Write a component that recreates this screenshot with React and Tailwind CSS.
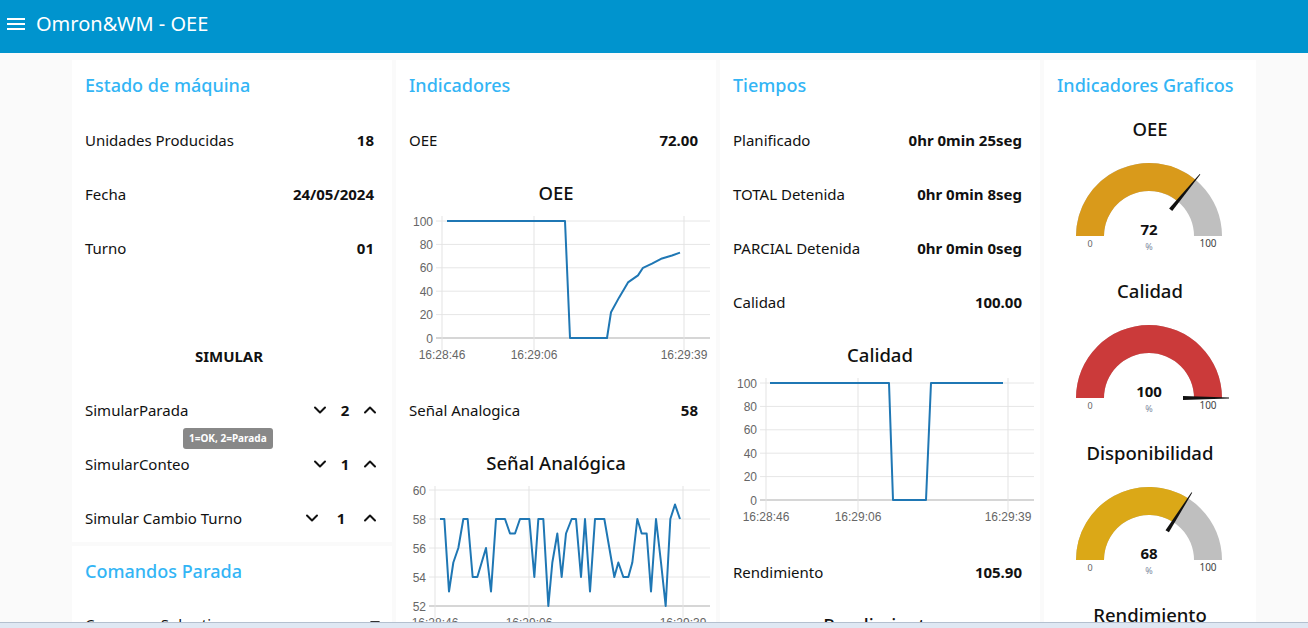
import React from 'react';

// Node-RED style OEE dashboard
const FONT = { fontFamily: "'Noto Sans', 'Open Sans', sans-serif" };

function Row({ label, value }) {
  return (
    <div className="mt-[6px] h-[48px] flex items-center justify-between pl-[13px] pr-[18px] text-[15px] text-[#111]">
      <span>{label}</span>
      <span className="font-bold">{value}</span>
    </div>
  );
}

function Chevron({ up }) {
  return (
    <svg width="14" height="14" viewBox="0 0 14 14">
      <polyline
        points={up ? '2,9.5 7,4.5 12,9.5' : '2,4.5 7,9.5 12,4.5'}
        fill="none"
        stroke="#111"
        strokeWidth="2"
        strokeLinecap="round"
        strokeLinejoin="round"
      />
    </svg>
  );
}

function Numeric({ label, value, width, children }) {
  return (
    <div className="relative mt-[6px] h-[48px] flex items-center justify-between pl-[13px] pr-[15px] text-[15px] text-[#111]">
      <span>{label}</span>
      <div className={`flex items-center justify-between ${width}`}>
        <Chevron />
        <span className="font-bold">{value}</span>
        <Chevron up />
      </div>
      {children}
    </div>
  );
}

function Card({ title, className = '', children }) {
  return (
    <div className={`bg-white ${className}`}>
      <div className="h-[50px] flex items-center px-[13px] text-[18px] font-medium text-[#33b5f5]">{title}</div>
      {children}
    </div>
  );
}

function LineChart({ title, yTicks, yTop, yBot, yMin, yMax, axisX, labelX, xTicks, points, xLabelY }) {
  const sy = (v) => yBot - ((v - yMin) / (yMax - yMin)) * (yBot - yTop);
  return (
    <div className="mt-[6px] h-[210px]">
      <div className="h-[46px] flex items-center justify-center text-[18.5px] font-medium text-[#111]">{title}</div>
      <svg width="320" height="164" className="block">
        {yTicks.map((v) => (
          <g key={v}>
            <line x1={axisX - 6} x2={314} y1={sy(v)} y2={sy(v)} stroke={v === yMin ? '#d6d6d6' : '#e6e6e6'} strokeWidth={v === yMin ? 2 : 1} />
            <text x={labelX} y={sy(v) + 4.5} textAnchor="end" fontSize="12" fill="#666" fontFamily="'Liberation Sans', Arial, sans-serif">{v}</text>
          </g>
        ))}
        {xTicks.map(([x, l]) => (
          <g key={l}>
            <line x1={x} x2={x} y1={yTop - 8} y2={yBot + 12} stroke="#e3e3e3" strokeWidth="1" />
            <text x={x} y={xLabelY} textAnchor="middle" fontSize="12" fill="#666" fontFamily="'Liberation Sans', Arial, sans-serif">{l}</text>
          </g>
        ))}
        <polyline
          points={points.map(([x, v]) => `${x},${sy(v)}`).join(' ')}
          fill="none"
          stroke="#1f77b4"
          strokeWidth="2"
          strokeLinejoin="round"
        />
      </svg>
    </div>
  );
}

function Gauge({ title, value, color }) {
  const cx = 105, cy = 94, R = 73, r = 45;
  const th = Math.PI * (1 - value / 100);
  const pt = (rad, a = th) => [cx + rad * Math.cos(a), cy - rad * Math.sin(a)];
  const [ox, oy] = pt(R);
  const [ix, iy] = pt(r);
  const bg = `M ${cx - R} ${cy} A ${R} ${R} 0 0 1 ${cx + R} ${cy} L ${cx + r} ${cy} A ${r} ${r} 0 0 0 ${cx - r} ${cy} Z`;
  const fg = `M ${cx - R} ${cy} A ${R} ${R} 0 0 1 ${ox} ${oy} L ${ix} ${iy} A ${r} ${r} 0 0 0 ${cx - r} ${cy} Z`;
  const px = Math.sin(th), py = Math.cos(th);
  const [b1, b2] = pt(34);
  const [t1, t2] = pt(80);
  const needle = `${b1 + 2 * px},${b2 + 2 * py} ${t1 + 0.4 * px},${t2 + 0.4 * py} ${t1 - 0.4 * px},${t2 - 0.4 * py} ${b1 - 2 * px},${b2 - 2 * py}`;
  return (
    <div className="mt-[6px] h-[156px]">
      <div className="h-[26px] flex items-center justify-center text-[18.5px] font-medium text-[#111]">{title}</div>
      <svg width="212" height="130" className="block">
        <path d={bg} fill="#bfbfbf" />
        <path d={fg} fill={color} />
        <polygon points={needle} fill="#111" />
        <text x={cx} y={cy - 1} textAnchor="middle" fontSize="15" fontWeight="bold" fill="#111" style={FONT}>{value}</text>
        <text x={cx} y={cy + 14} textAnchor="middle" fontSize="9" fill="#7d8aa0" style={FONT}>%</text>
        <text x={cx - 59} y={cy + 11} textAnchor="middle" fontSize="9" fill="#666" style={FONT}>0</text>
        <text x={cx + 59} y={cy + 11} textAnchor="middle" fontSize="10" fill="#444" style={FONT}>100</text>
      </svg>
    </div>
  );
}

const oeePts = [[51, 100], [169, 100], [174, 0], [211, 0], [215, 22], [223, 34.5], [232, 47.5], [242, 53.5], [247, 60], [256, 63.5], [266, 68], [276, 70.5], [284, 73]];
const calPts = [[50, 100], [169, 100], [173, 0], [206, 0], [211, 100], [283, 100]];
const senalRaw = [[135, 58], [148, 58], [162, 53], [175, 55], [190, 56], [205, 58], [218, 58], [233, 54], [247, 54], [260, 55], [273, 56], [288, 53], [303, 58], [330, 58], [345, 57], [360, 57], [375, 58], [403, 58], [418, 54], [430, 58], [445, 58], [460, 52], [472, 55], [487, 57], [500, 54], [513, 57], [530, 58], [543, 58], [558, 54], [570, 58], [585, 53], [600, 58], [628, 58], [643, 56], [658, 54], [670, 55], [685, 54], [700, 54], [712, 55], [727, 58], [740, 57], [755, 57], [768, 53], [783, 58], [798, 55], [812, 52], [826, 58], [840, 59], [855, 58]];
const senalPts = senalRaw.map(([x, v]) => [x / 3 - 1, v]);

const timeTicks = [[46, '16:28:46'], [138, '16:29:06'], [288, '16:29:39']];

export default function App() {
  return (
    <div className="w-[1308px] h-[628px] overflow-hidden flex flex-col bg-[#fafafa]" style={FONT}>
      {/* Header */}
      <div className="h-[53px] shrink-0 bg-[#0094ce] flex items-start pt-[11px] pl-[7px] text-white">
        <svg width="18" height="12" viewBox="0 0 18 12" className="mt-[7px]">
          <rect y="0" width="18" height="2" fill="#fff" />
          <rect y="5" width="18" height="2" fill="#fff" />
          <rect y="10" width="18" height="2" fill="#fff" />
        </svg>
        <span className="ml-[11px] text-[20px] leading-[26px]">Omron&amp;WM - OEE</span>
      </div>

      {/* Groups */}
      <div className="flex-1 overflow-hidden flex gap-[4px] pl-[72px] pt-[7px]">
        <div className="w-[320px] flex flex-col gap-[4px]">
          <Card title="Estado de máquina">
            <Row label="Unidades Producidas" value="18" />
            <Row label="Fecha" value="24/05/2024" />
            <Row label="Turno" value="01" />
            <div className="mt-[6px] h-[48px]" />
            <div className="mt-[6px] h-[48px] flex items-center justify-center text-[15px] font-bold text-[#111] pr-[6px]">SIMULAR</div>
            <Numeric label="SimularParada" value="2" width="w-[64px]">
              <div className="absolute left-[111px] top-[42px] z-10 rounded-[3px] bg-[#888] px-[6px] py-[3px] text-[10px] font-bold leading-[15px] text-white">
                1=OK, 2=Parada
              </div>
            </Numeric>
            <Numeric label="SimularConteo" value="1" width="w-[64px]" />
            <Numeric label="Simular Cambio Turno" value="1" width="w-[72px]" />
          </Card>
          <Card title="Comandos Parada" className="flex-1">
            <div className="mt-[4px] h-[48px] flex items-center justify-between pl-[13px] pr-[12px] text-[15px] text-[#111]">
              <span>Comenzar Sobretiempo</span>
              <svg width="10" height="6" viewBox="0 0 10 6"><polygon points="0,0 10,0 5,6" fill="#333" /></svg>
            </div>
          </Card>
        </div>

        <Card title="Indicadores" className="w-[320px]">
          <Row label="OEE" value="72.00" />
          <LineChart title="OEE" yTicks={[0, 20, 40, 60, 80, 100]} yMin={0} yMax={100} yTop={5} yBot={122} axisX={46} labelX={37} xTicks={timeTicks} points={oeePts} xLabelY={143} />
          <Row label="Señal Analogica" value="58" />
          <LineChart title="Señal Analógica" yTicks={[52, 54, 56, 58, 60]} yMin={52} yMax={60} yTop={4} yBot={120} axisX={39} labelX={30} xTicks={[[39, '16:28:46'], [133, '16:29:06'], [287, '16:29:39']]} points={senalPts} xLabelY={141} />
        </Card>

        <Card title="Tiempos" className="w-[320px]">
          <Row label="Planificado" value="0hr 0min 25seg" />
          <Row label="TOTAL Detenida" value="0hr 0min 8seg" />
          <Row label="PARCIAL Detenida" value="0hr 0min 0seg" />
          <Row label="Calidad" value="100.00" />
          <LineChart title="Calidad" yTicks={[0, 20, 40, 60, 80, 100]} yMin={0} yMax={100} yTop={5} yBot={122} axisX={46} labelX={37} xTicks={timeTicks} points={calPts} xLabelY={143} />
          <Row label="Rendimiento" value="105.90" />
          <div className="mt-[6px] h-[46px] flex items-center justify-center text-[18.5px] font-medium text-[#111]">Rendimiento</div>
        </Card>

        <Card title="Indicadores Graficos" className="w-[212px]">
          <Gauge title="OEE" value={72} color="#d99a1b" />
          <Gauge title="Calidad" value={100} color="#cb3a3a" />
          <Gauge title="Disponibilidad" value={68} color="#dba817" />
          <div className="mt-[6px] h-[26px] flex items-center justify-center text-[18.5px] font-medium text-[#111]">Rendimiento</div>
        </Card>
      </div>

      {/* Window bottom strip */}
      <div className="h-[6px] shrink-0 border-t border-[#b4c0cf] bg-[#dfe8f3]" />
    </div>
  );
}
